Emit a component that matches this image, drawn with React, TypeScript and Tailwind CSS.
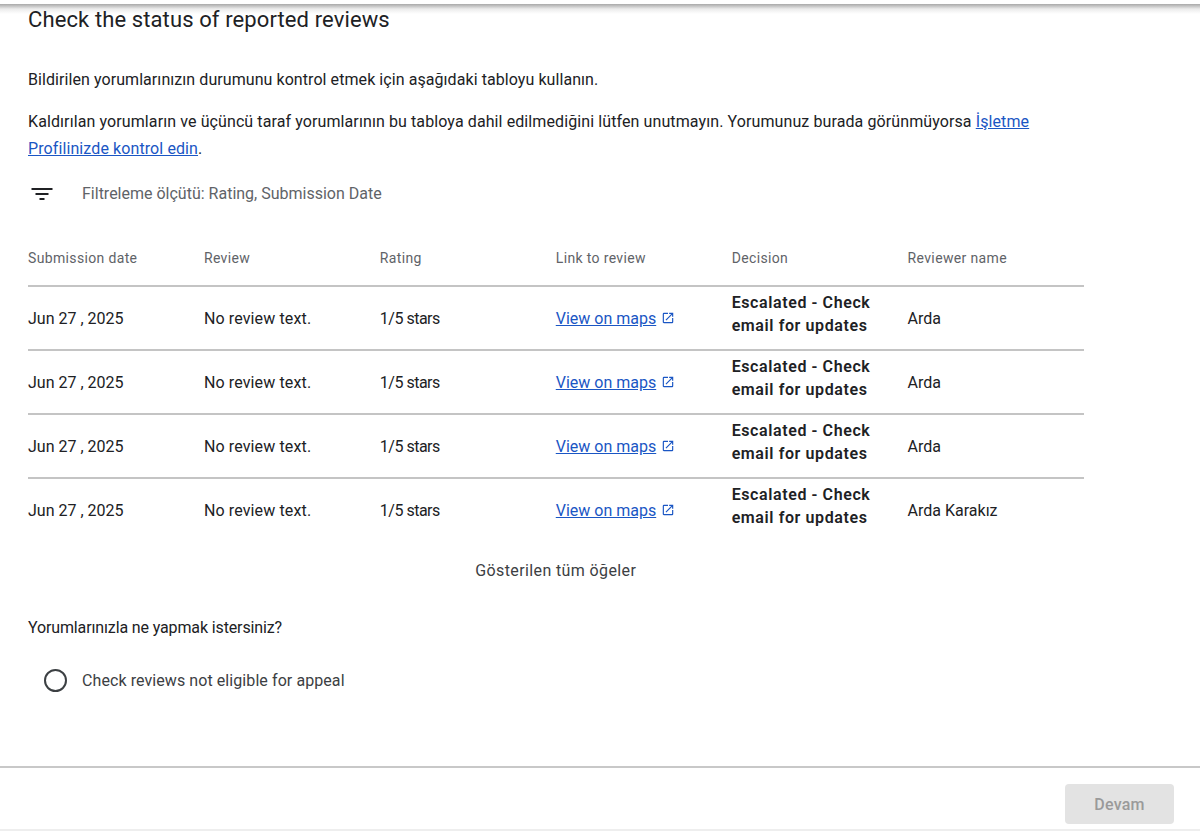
const rows = ["Arda", "Arda", "Arda", "Arda Karakız"];

const headers = [
  "Submission date",
  "Review",
  "Rating",
  "Link to review",
  "Decision",
  "Reviewer name",
];

export default function App() {
  return (
    <div className="flex h-[834px] flex-col overflow-hidden bg-white font-['Roboto',sans-serif] text-[#202124]">
      {/* Top shadow strip */}
      <div className="mt-1 h-2.5 shrink-0 bg-gradient-to-b from-[#a9a9a9] via-[#ececec] to-white" />

      <main className="flex-1 pl-7">
        <h1 className="-mt-[8px] text-[22px] leading-7 tracking-[0.11px]">
          Check the status of reported reviews
        </h1>

        <p className="mt-[33px] text-base leading-[26px] tracking-[0.07px]">
          Bildirilen yorumlarınızın durumunu kontrol etmek için aşağıdaki tabloyu kullanın.
        </p>
        <p className="mt-[15px] w-[1020px] text-base leading-[27px] tracking-[0.1px]">
          Kaldırılan yorumların ve üçüncü taraf yorumlarının bu tabloya dahil edilmediğini lütfen
          unutmayın. Yorumunuz burada görünmüyorsa{" "}
          <a className="text-[#1a56c4] underline">İşletme Profilinizde kontrol edin</a>.
        </p>

        {/* Filter */}
        <div className="mt-[20px] flex h-6 items-center">
          <svg width="28" height="24" viewBox="0 0 28 24" className="shrink-0 text-[#202124]">
            <path d="M3.5 6h21v2h-21zM7.5 11h13v2h-13zM11.5 16h5v2h-5z" fill="currentColor" />
          </svg>
          <span className="ml-[26px] text-base text-[#5f6368]">
            Filtreleme ölçütü: Rating, Submission Date
          </span>
        </div>

        {/* Table */}
        <div className="mt-[31px] w-[1055.5px]">
          <div className="grid h-[50px] grid-cols-6 items-center border-b-2 border-[#c4c4c4] pb-[6px] text-sm tracking-[0.35px] text-[#5f6368]">
            {headers.map((h) => (
              <div key={h}>{h}</div>
            ))}
          </div>
          {rows.map((name, i) => (
            <div
              key={i}
              className={`grid h-[64px] grid-cols-6 items-center border-b-2 pt-[2px] text-base ${
                i < rows.length - 1 ? "border-[#c4c4c4]" : "border-transparent"
              }`}
            >
              <div>Jun 27 , 2025</div>
              <div className="tracking-[0.13px]">No review text.</div>
              <div className="tracking-[-0.5px]">1/5 stars</div>
              <div className="flex items-center gap-[5px]">
                <a className="text-[#1a56c4] underline">View on maps</a>
                <svg viewBox="0 0 24 24" className="mb-[2px] h-[14px] w-[14px] fill-[#1a56c4]">
                  <path d="M19 19H5V5h7V3H5a2 2 0 0 0-2 2v14c0 1.1.9 2 2 2h14a2 2 0 0 0 2-2v-7h-2v7zM14 3v2h3.59l-9.83 9.83 1.41 1.41L19 6.41V10h2V3h-7z" />
                </svg>
              </div>
              <div className="w-[150px] pb-[10px] font-semibold leading-[23px] tracking-[0.6px]">
                Escalated - Check email for updates
              </div>
              <div>{name}</div>
            </div>
          ))}
          <div className="mt-[16px] text-center text-base leading-6 tracking-[0.38px] text-[#3c4043]">
            Gösterilen tüm öğeler
          </div>
        </div>

        <p className="mt-[33px] text-base leading-6 tracking-[-0.13px]">
          Yorumlarınızla ne yapmak istersiniz?
        </p>

        <label className="mt-[28px] flex items-center">
          <span className="ml-4 h-[23px] w-[23px] shrink-0 rounded-full border-2 border-[#3c4043]" />
          <span className="ml-[15px] pt-[1px] text-base leading-6 tracking-[0.08px] text-[#3c4043]">
            Check reviews not eligible for appeal
          </span>
        </label>
      </main>

      {/* Footer */}
      <footer className="flex h-[65px] shrink-0 items-start justify-end border-y-2 border-t-[#c8c8c8] border-b-[#eeeeee] pr-[26px] pt-[16px]">
        <button className="h-10 w-[109px] rounded bg-[#e3e3e3] pt-[1px] text-base font-medium tracking-[0.2px] text-[#9a9a9a]">
          Devam
        </button>
      </footer>
      <div className="h-[3px] shrink-0 bg-white" />
    </div>
  );
}
